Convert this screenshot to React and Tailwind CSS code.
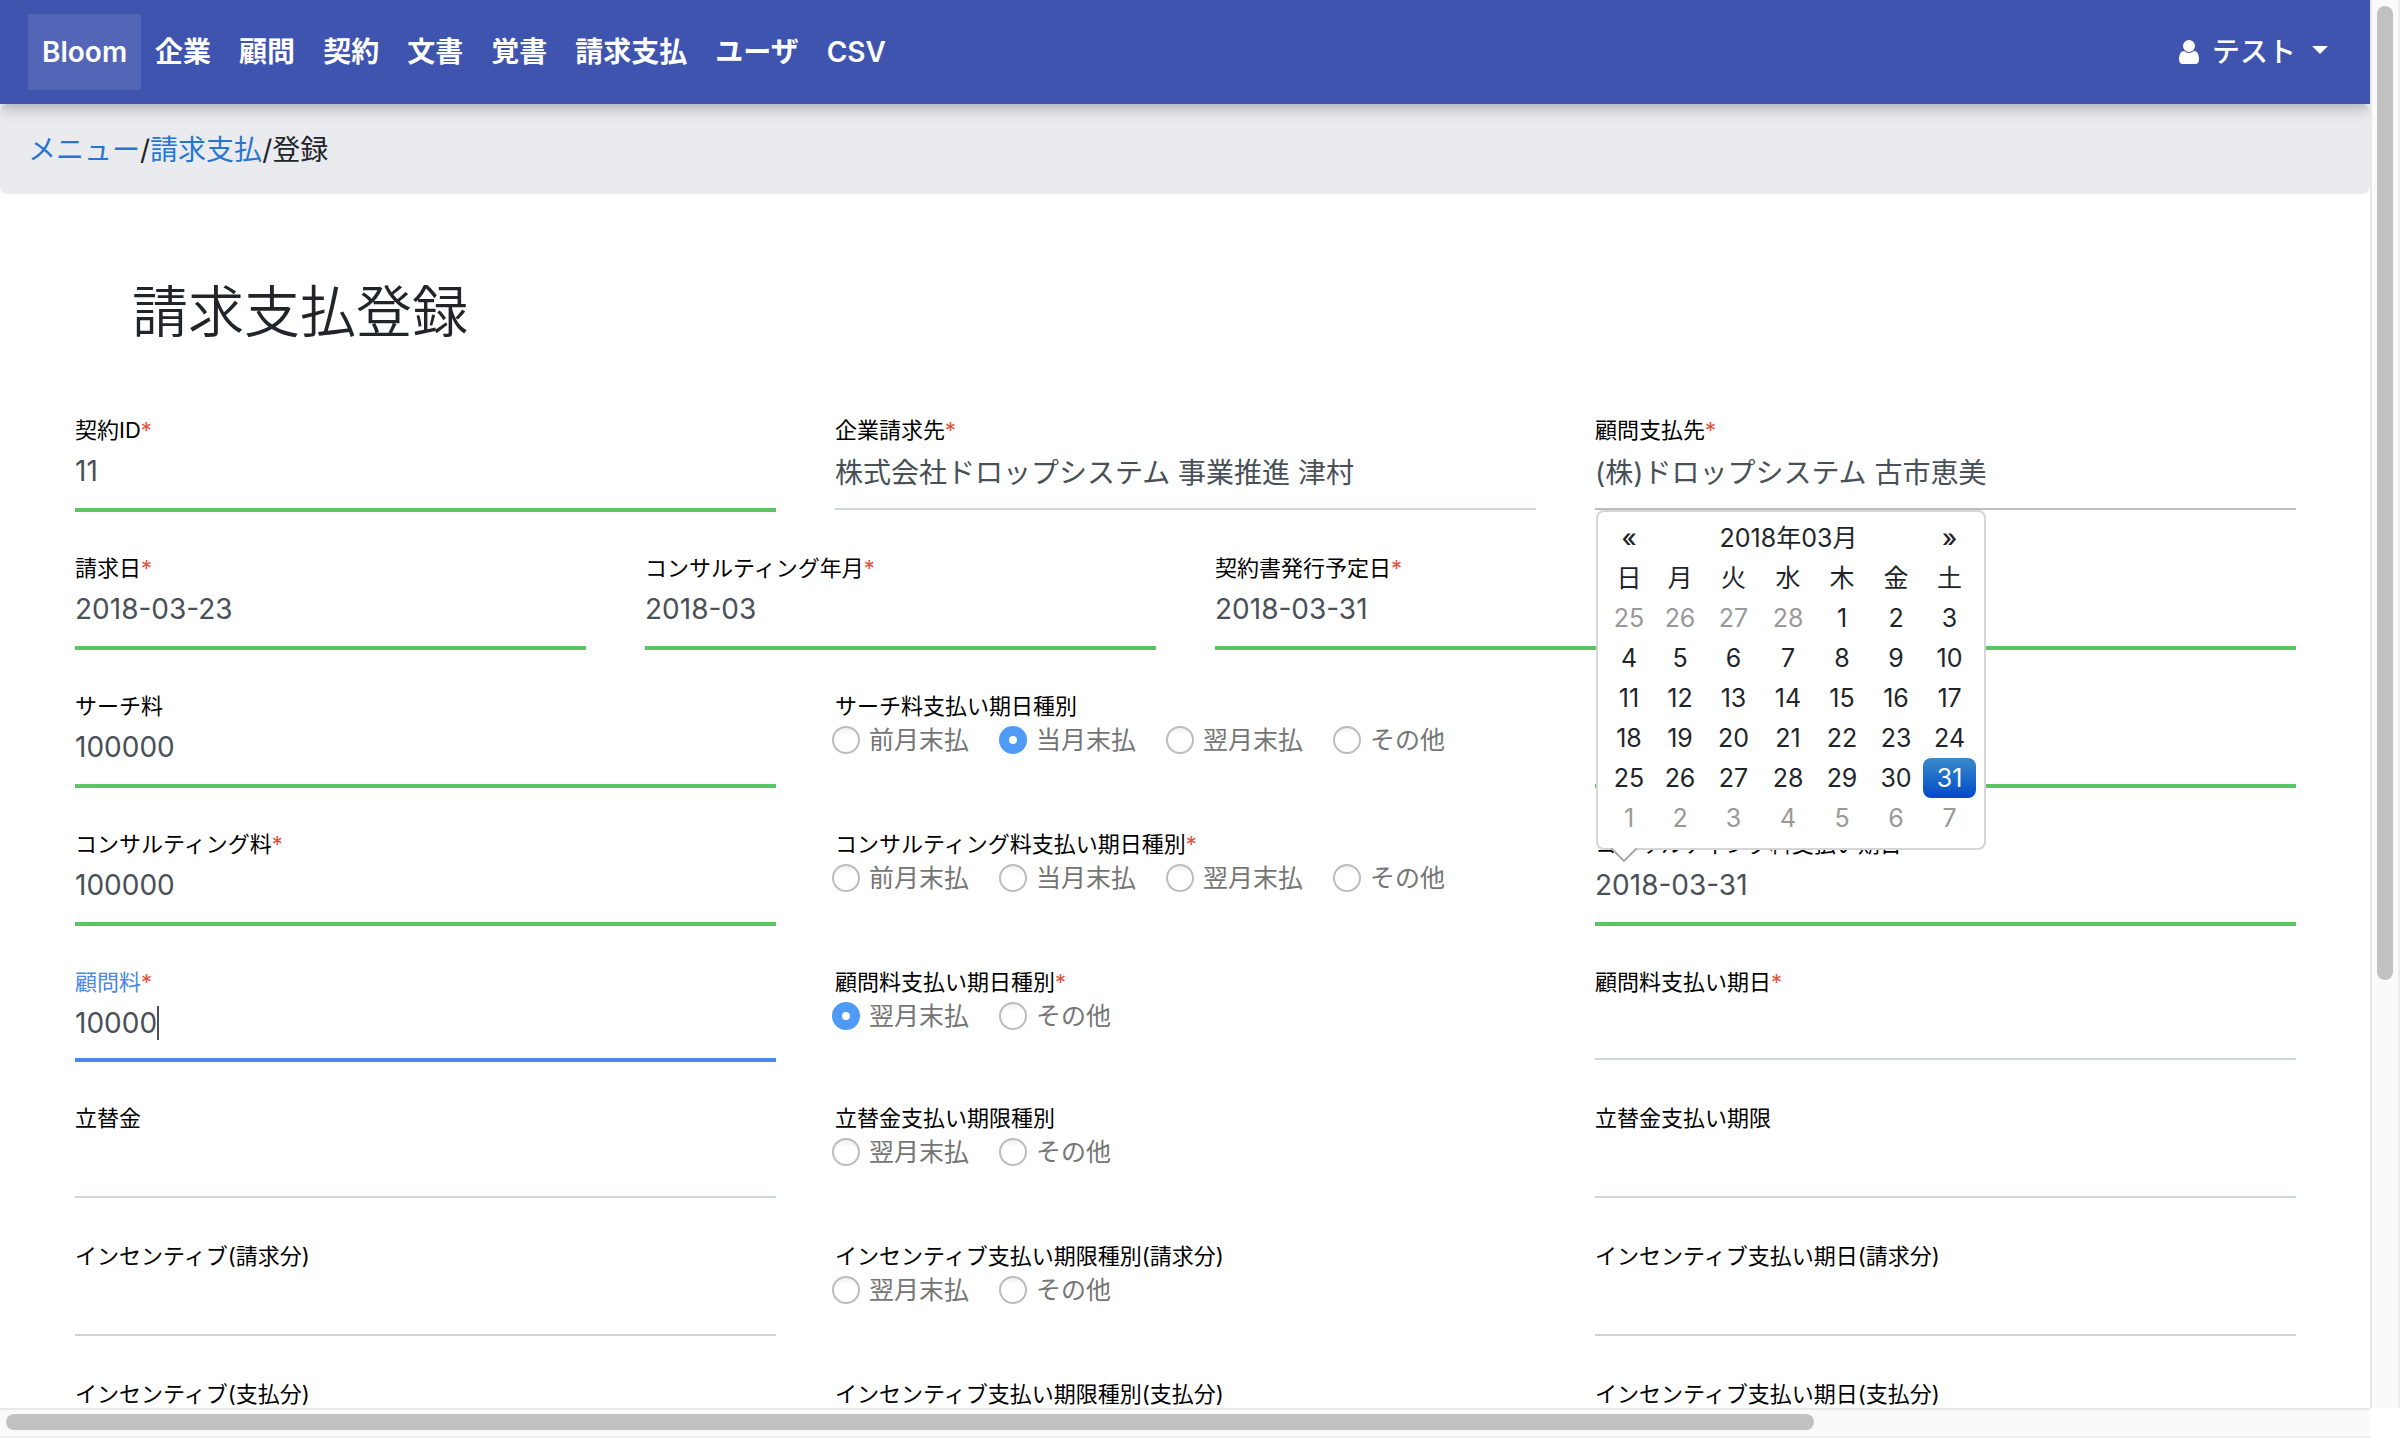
import React from "react";

const NAV_ITEMS = ["企業", "顧問", "契約", "文書", "覚書", "請求支払", "ユーザ", "CSV"];
const WEEKDAYS = ["日", "月", "火", "水", "木", "金", "土"];
const WEEKS = [
  [25, 26, 27, 28, 1, 2, 3],
  [4, 5, 6, 7, 8, 9, 10],
  [11, 12, 13, 14, 15, 16, 17],
  [18, 19, 20, 21, 22, 23, 24],
  [25, 26, 27, 28, 29, 30, 31],
  [1, 2, 3, 4, 5, 6, 7],
];
const FOUR_TERMS = ["前月末払", "当月末払", "翌月末払", "その他"];
const TWO_TERMS = ["翌月末払", "その他"];

const UNDERLINES = {
  valid: "h-[66px] border-b-4 border-[#5bc463] pb-3",
  plain: "h-16 border-b-2 border-[#ced4da] pb-3",
  dark: "h-16 border-b-2 border-[#bdbdbd] pb-3",
  active: "h-16 border-b-4 border-[#4a88ec] pb-[10px]",
  compact: "h-[62px] border-b-2 border-[#ced4da] pb-[10px]",
};

function Star() {
  return <span className="text-[#e8503c]">*</span>;
}

function Field({ id, label, required, value = "", tone = "plain", caret, className = "", children }) {
  return (
    <div className={`min-w-0 ${className}`}>
      <label
        htmlFor={id}
        className={`block h-8 text-[22px] leading-8 whitespace-nowrap ${caret ? "text-[#4a88ec]" : "text-black"}`}
      >
        {label}
        {required && <Star />}
      </label>
      <div className={`relative flex items-center ${UNDERLINES[tone]}`}>
        <input
          id={id}
          type="text"
          defaultValue={value}
          className={`h-full bg-transparent text-[28px] text-[#495057] outline-none ${caret ? "field-sizing-content" : "w-full"}`}
        />
        {caret && <span className="h-[34px] w-[2px] bg-[#495057]" />}
        {children}
      </div>
    </div>
  );
}

function RadioField({ name, label, required, options, selected }) {
  return (
    <fieldset className="min-w-0">
      <legend className="block h-8 text-[22px] leading-8 whitespace-nowrap text-black">
        {label}
        {required && <Star />}
      </legend>
      <div className="-ml-[3px] flex h-9 items-center gap-[30px]">
        {options.map((option) => (
          <label key={option} className="flex items-center gap-[9px] text-[25px] leading-9 whitespace-nowrap text-[#757575]">
            <input
              type="radio"
              name={name}
              defaultChecked={option === selected}
              className="size-7 shrink-0 appearance-none rounded-full border-2 border-[#bdbdbd] bg-white bg-linear-to-b from-[#f0f0f0] to-white to-30% checked:border-[10px] checked:border-[#4f9af7] checked:bg-none"
            />
            {option}
          </label>
        ))}
      </div>
    </fieldset>
  );
}

function Row({ four, compact, children }) {
  return (
    <div
      className={`grid items-start gap-x-[59px] ${four ? "grid-cols-4" : "grid-cols-3"} ${compact ? "min-h-[96px]" : "min-h-[98px]"}`}
    >
      {children}
    </div>
  );
}

function DatePicker() {
  return (
    <div className="absolute bottom-full left-[1px] z-10 mb-[10px] w-[390px] rounded-lg border-2 border-[#d6d6d6] bg-white pt-[6px] pr-2 pb-[10px] pl-[6px]">
      <table className="w-full table-fixed border-collapse text-center text-[25px] leading-10 text-[#212529]">
        <colgroup>
          <col className="w-[50px]" />
          <col className="w-[52px]" />
          <col className="w-[55px]" />
          <col className="w-[54px]" />
          <col className="w-[54px]" />
          <col className="w-[54px]" />
          <col className="w-[53px]" />
        </colgroup>
        <thead>
          <tr>
            <th className="h-10 p-0 font-medium">
              <button type="button" className="block w-full leading-10">«</button>
            </th>
            <th colSpan={5} className="h-10 p-0">
              <button type="button" className="block w-full font-normal leading-10">2018年03月</button>
            </th>
            <th className="h-10 p-0 font-medium">
              <button type="button" className="block w-full leading-10">»</button>
            </th>
          </tr>
          <tr>
            {WEEKDAYS.map((day) => (
              <th key={day} className="h-10 p-0 font-normal">{day}</th>
            ))}
          </tr>
        </thead>
        <tbody>
          {WEEKS.map((week, w) => (
            <tr key={w}>
              {week.map((day) => {
                const outside = (w === 0 && day > 7) || w === 5;
                const chosen = w === 4 && day === 31;
                return (
                  <td key={day} className="h-10 p-0">
                    <button
                      type="button"
                      className={
                        chosen
                          ? "block w-full rounded-lg bg-linear-to-b from-[#3a8acb] to-[#0648c8] leading-10 text-white"
                          : outside
                            ? "block w-full leading-10 text-[#999999]"
                            : "block w-full leading-10"
                      }
                    >
                      {day}
                    </button>
                  </td>
                );
              })}
            </tr>
          ))}
        </tbody>
      </table>
      <svg className="absolute top-full left-3 h-[14px] w-7" viewBox="0 0 28 14" aria-hidden="true">
        <path d="M0 0L14 13L28 0Z" fill="#fff" />
        <path d="M1 0L14 13L27 0" fill="none" stroke="#a8a8a8" strokeWidth="2" />
      </svg>
    </div>
  );
}

function Header() {
  return (
    <header className="relative z-20 flex h-[104px] items-center justify-between bg-[#3f54af] pr-[42px] pl-7 text-[28px] text-white shadow-[0_4px_10px_rgba(0,0,0,0.16),0_4px_20px_rgba(0,0,0,0.12)]">
      <nav className="flex items-center font-semibold">
        <a href="#home" className="bg-white/10 px-[14px] py-[14px] leading-[48px]">Bloom</a>
        {NAV_ITEMS.map((item) => (
          <a key={item} href={`#${item}`} className="px-[14px] leading-[48px]">{item}</a>
        ))}
      </nav>
      <button type="button" className="flex items-center font-medium leading-[48px]">
        <svg className="mr-[9px] size-7" viewBox="0 0 1792 1792" fill="currentColor" aria-hidden="true">
          <path d="M1536 1399q0 109-62.5 187t-150.5 78h-854q-88 0-150.5-78t-62.5-187q0-85 8.5-160.5t31.5-152 58.5-131 94-89 134.5-34.5q131 128 313 128t313-128q76 0 134.5 34.5t94 89 58.5 131 31.5 152 8.5 160.5zm-256-887q0 159-112.5 271.5t-271.5 112.5-271.5-112.5-112.5-271.5 112.5-271.5 271.5-112.5 271.5 112.5 112.5 271.5z" />
        </svg>
        テスト
        <svg className="mb-1 ml-4 h-2 w-4" viewBox="0 0 16 8" fill="currentColor" aria-hidden="true">
          <path d="M0 0H16L8 8Z" />
        </svg>
      </button>
    </header>
  );
}

export default function App() {
  return (
    <div className="grid h-screen grid-cols-[minmax(0,1fr)_30px] grid-rows-[minmax(0,1fr)_30px] overflow-hidden bg-white font-['Inter','Noto_Sans_CJK_JP',sans-serif] text-[#212529]">
      <div className="overflow-hidden">
        <Header />
        <nav className="h-[90px] rounded-lg bg-[#e9ebef] pl-7 text-[28px] leading-[92px]">
          <a href="#menu" className="text-[#2775d3]">メニュー</a>/
          <a href="#billing" className="text-[#2775d3]">請求支払</a>/登録
        </nav>
        <main className="pt-[76px] pr-[74px] pl-[75px]">
          <h1 className="mb-[60px] ml-[57px] text-[56px] leading-[84px] font-[350]">請求支払登録</h1>
          <form className="flex flex-col gap-10">
            <Row>
              <Field id="contract" label="契約ID" required value="11" tone="valid" />
              <Field id="company" label="企業請求先" required value="株式会社ドロップシステム 事業推進 津村" />
              <Field id="advisor" label="顧問支払先" required value="(株)ドロップシステム 古市恵美" tone="dark" />
            </Row>
            <Row four>
              <Field id="billing-date" label="請求日" required value="2018-03-23" tone="valid" />
              <Field id="consulting-month" label="コンサルティング年月" required value="2018-03" tone="valid" />
              <Field id="issue-date" label="契約書発行予定日" required value="2018-03-31" tone="valid" className="col-span-2" />
            </Row>
            <Row>
              <Field id="search-fee" label="サーチ料" value="100000" tone="valid" />
              <RadioField name="search-term" label="サーチ料支払い期日種別" options={FOUR_TERMS} selected="当月末払" />
              <Field id="search-due" label="サーチ料支払い期日" value="2018-03-31" tone="valid" />
            </Row>
            <Row>
              <Field id="consulting-fee" label="コンサルティング料" required value="100000" tone="valid" />
              <RadioField name="consulting-term" label="コンサルティング料支払い期日種別" required options={FOUR_TERMS} />
              <Field id="consulting-due" label="コンサルティング料支払い期日" value="2018-03-31" tone="valid">
                <DatePicker />
              </Field>
            </Row>
            <Row compact>
              <Field id="advisor-fee" label="顧問料" required value="10000" tone="active" caret />
              <RadioField name="advisor-term" label="顧問料支払い期日種別" required options={TWO_TERMS} selected="翌月末払" />
              <Field id="advisor-due" label="顧問料支払い期日" required tone="compact" />
            </Row>
            <Row>
              <Field id="advance" label="立替金" />
              <RadioField name="advance-term" label="立替金支払い期限種別" options={TWO_TERMS} />
              <Field id="advance-due" label="立替金支払い期限" />
            </Row>
            <Row>
              <Field id="incentive-bill" label="インセンティブ(請求分)" />
              <RadioField name="incentive-bill-term" label="インセンティブ支払い期限種別(請求分)" options={TWO_TERMS} />
              <Field id="incentive-bill-due" label="インセンティブ支払い期日(請求分)" />
            </Row>
            <Row>
              <Field id="incentive-pay" label="インセンティブ(支払分)" />
              <RadioField name="incentive-pay-term" label="インセンティブ支払い期限種別(支払分)" options={TWO_TERMS} />
              <Field id="incentive-pay-due" label="インセンティブ支払い期日(支払分)" />
            </Row>
          </form>
        </main>
      </div>
      <div className="flex justify-center border-r-2 border-l-2 border-r-[#ededed] border-l-[#e8e8e8] bg-[#fafafa] pt-[6px]">
        <div className="h-[69.5%] w-4 rounded-full bg-[#c1c1c1]" />
      </div>
      <div className="flex items-center border-t-2 border-b-2 border-t-[#e8e8e8] border-b-[#ededed] bg-[#fafafa] pb-[2px] pl-[6px]">
        <div className="h-4 w-[76.5%] rounded-full bg-[#c1c1c1]" />
      </div>
      <div />
    </div>
  );
}
